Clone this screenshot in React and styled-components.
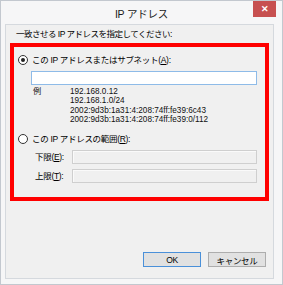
import React from "react";
import styled, { createGlobalStyle } from "styled-components";

const Global = createGlobalStyle`
  html, body { margin: 0; padding: 0; background: #f4f5f6; }
  body { font-family: "Liberation Sans", "Noto Sans CJK JP", sans-serif; color: #000; }
  * { box-sizing: border-box; }
`;

const Window = styled.div`
  width: 283px;
  height: 285px;
  background: #f6f6f7;
  border: 1px solid #c3c8cf;
  display: flex;
  flex-direction: column;
`;

const TitleBar = styled.div`
  height: 23px;
  display: grid;
  grid-template-columns: 29px 1fr 29px;
  align-items: start;
`;

const Title = styled.div`
  grid-column: 2;
  justify-self: center;
  font-size: 10.5px;
  line-height: 12px;
  margin-top: 7px;
  color: #1a1a1a;
  letter-spacing: -0.2px;
`;

const CloseButton = styled.div`
  grid-column: 3;
  justify-self: start;
  width: 23px;
  height: 16px;
  background: #c75050;
  color: #fff;
  display: flex;
  align-items: center;
  justify-content: center;
  font-size: 9px;
  font-weight: bold;
`;

const Client = styled.div`
  flex: 1;
  margin: 0 8px 5px 4px;
  background: #f0f0f0;
  border: 1px solid #d5d9de;
  display: flex;
  flex-direction: column;
  padding: 0 4px;
`;

const Prompt = styled.div`
  font-size: 8.5px;
  line-height: 14px;
  padding: 2px 0 2px 6px;
  letter-spacing: -0.5px;
  white-space: nowrap;
`;

const Highlight = styled.div`
  border: 4px solid #ff0000;
  padding: 6px 8px 14px 0;
  display: flex;
  flex-direction: column;
`;

const RadioRow = styled.div`
  display: flex;
  align-items: center;
  height: 14px;
  padding-left: 4px;
  gap: 4px;
  margin-top: ${(p) => p.$mt || 0}px;
`;

const Radio = styled.span`
  width: 10px;
  height: 10px;
  border-radius: 50%;
  border: 1px solid #333;
  background: #fff;
  display: flex;
  align-items: center;
  justify-content: center;
  flex: none;
  &::after {
    content: "";
    width: 4px;
    height: 4px;
    border-radius: 50%;
    background: ${(p) => (p.$checked ? "#222" : "transparent")};
  }
`;

const Label = styled.span`
  font-size: 8.5px;
  line-height: 14px;
  letter-spacing: -0.3px;
  white-space: nowrap;
`;

const TextBox = styled.div`
  height: 14px;
  margin-left: ${(p) => p.$ml}px;
  flex: 1;
  border: 1px solid ${(p) => (p.$disabled ? "#cfcfcf" : "#8ebbe8")};
  background: ${(p) => (p.$disabled ? "#f0f0f0" : "#fff")};
  box-shadow: ${(p) => (p.$disabled ? "inset 1px 1px 0 #fafafa" : "none")};
`;

const Examples = styled.div`
  display: grid;
  grid-template-columns: 37px auto;
  padding-left: 19px;
  margin-top: 2px;
  font-size: 8.2px;
  line-height: 9.3px;
  color: #111;
`;

const ExampleLines = styled.div`
  display: flex;
  flex-direction: column;
`;

const FieldRow = styled.div`
  display: flex;
  align-items: center;
  padding-left: ${(p) => p.$pl}px;
  margin-top: ${(p) => p.$mt}px;
`;

const FieldLabel = styled(Label)`
  width: 37px;
  flex: none;
`;

const Spacer = styled.div`
  flex: 1;
`;

const ButtonBar = styled.div`
  display: flex;
  justify-content: flex-end;
  gap: 7px;
  padding: 0 3px 11px 0;
`;

const Button = styled.div`
  width: 58px;
  height: 15px;
  background: #e1e1e1;
  border: 1px solid ${(p) => (p.$default ? "#4a90d9" : "#adadad")};
  display: flex;
  align-items: center;
  justify-content: center;
  font-size: 8.5px;
  letter-spacing: -0.3px;
`;

export default function App() {
  return (
    <>
      <Global />
      <Window>
        <TitleBar>
          <Title>IP アドレス</Title>
          <CloseButton>✕</CloseButton>
        </TitleBar>
        <Client>
          <Prompt>一致させる IP アドレスを指定してください:</Prompt>
          <Highlight>
            <RadioRow>
              <Radio $checked />
              <Label>
                この IP アドレスまたはサブネット(<u>A</u>):
              </Label>
            </RadioRow>
            <FieldRow $mt={4} $pl={0}>
              <TextBox $ml={17} />
            </FieldRow>
            <Examples>
              <span>例</span>
              <ExampleLines>
                <span>192.168.0.12</span>
                <span>192.168.1.0/24</span>
                <span>2002:9d3b:1a31:4:208:74ff:fe39:6c43</span>
                <span>2002:9d3b:1a31:4:208:74ff:fe39:0/112</span>
              </ExampleLines>
            </Examples>
            <RadioRow $mt={8}>
              <Radio />
              <Label>
                この IP アドレスの範囲(<u>R</u>):
              </Label>
            </RadioRow>
            <FieldRow $mt={4} $pl={21}>
              <FieldLabel>
                下限(<u>E</u>):
              </FieldLabel>
              <TextBox $ml={0} $disabled />
            </FieldRow>
            <FieldRow $mt={5} $pl={21}>
              <FieldLabel>
                上限(<u>T</u>):
              </FieldLabel>
              <TextBox $ml={0} $disabled />
            </FieldRow>
          </Highlight>
          <Spacer />
          <ButtonBar>
            <Button $default>OK</Button>
            <Button>キャンセル</Button>
          </ButtonBar>
        </Client>
      </Window>
    </>
  );
}
